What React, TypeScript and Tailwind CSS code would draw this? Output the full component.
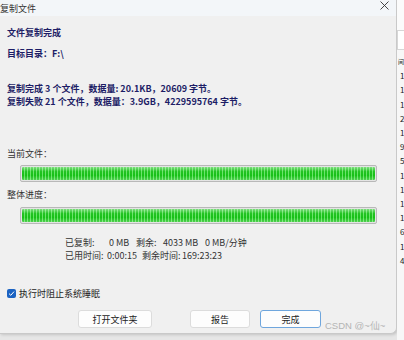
import React from 'react';

const sideRows = ['1', '1', '1', '2', '1', '9', '5', '1', '1', '1', '1', '6', '1', '4'];

const ProgressBar: React.FC = () => (
  <div className="ml-[13px] h-[17px] w-[357px] rounded-[2px] border border-[#b8b8b8] bg-[#e4e4e4] p-[1px]">
    <div className="h-full w-full rounded-[1px] bg-[repeating-linear-gradient(90deg,#17c017_0px,#17c017_1.5px,#66e466_1.5px,#66e466_3px)]">
      <div className="h-full w-full bg-[linear-gradient(180deg,rgba(255,255,255,0.45)_0%,rgba(255,255,255,0.05)_35%,rgba(0,0,0,0)_65%,rgba(255,255,255,0.25)_100%)]" />
    </div>
  </div>
);

const Button: React.FC<{ label: string; width: string; primary?: boolean; className?: string }> = ({ label, width, primary, className }) => (
  <div
    className={`${width} ${className ?? ''} flex h-[18px] items-center justify-center rounded-[3px] border bg-[#fdfdfd] text-[9px] text-[#222] ${
      primary ? 'border-[#6fa6dd]' : 'border-[#dcdcdc]'
    }`}
  >
    {label}
  </div>
);

export default function App() {
  return (
    <div className="flex h-[340px] w-[404px] overflow-hidden bg-[#e6e6e6] font-['Noto_Sans_CJK_SC','Liberation_Sans',sans-serif]">
      {/* dialog */}
      <div className="flex h-[334px] w-[397px] shrink-0 flex-col rounded-br-[6px] border-r border-b border-[#c9c9c9] bg-[#f0f0f0] shadow-[1px_1px_3px_rgba(0,0,0,0.15)]">
        <div className="flex h-[16px] items-center justify-between bg-[#f3f6f9]">
          <span className="text-[9px] leading-[13px] text-[#333]">复制文件</span>
          <svg width="9" height="9" viewBox="0 0 9 9" className="mr-[7px] mb-[5px]">
            <path d="M0.5 0.5 L8.5 8.5 M8.5 0.5 L0.5 8.5" stroke="#333" strokeWidth="0.9" fill="none" />
          </svg>
        </div>

        <div className="flex flex-col pl-[7px] text-[9px] leading-[13px]">
          <p className="mt-[10px] font-bold text-[#1d1d66]">文件复制完成</p>
          <p className="mt-[8px] font-bold text-[#1d1d66]">目标目录：F:\</p>
          <p className="mt-[22px] font-bold text-[#1d1d66]">复制完成 3 个文件，数据量: 20.1KB，20609 字节。</p>
          <p className="font-bold text-[#1d1d66]">复制失败 21 个文件，数据量：3.9GB，4229595764 字节。</p>

          <p className="mt-[39px] text-[#333]">当前文件：</p>
          <div className="mt-[5px]">
            <ProgressBar />
          </div>
          <p className="mt-[6px] text-[#333]">整体进度：</p>
          <div className="mt-[6px]">
            <ProgressBar />
          </div>

          <div className="mt-[12px] ml-[58px] flex flex-col text-[#333]">
            <div className="flex whitespace-nowrap">
              <span className="w-[44px]">已复制:</span>
              <span className="w-[27px]">0 MB</span>
              <span className="w-[27px]">剩余:</span>
              <span className="w-[42px]">4033 MB</span>
              <span>0 MB/分钟</span>
            </div>
            <div className="flex whitespace-nowrap">
              <span className="w-[42px]">已用时间:</span>
              <span className="w-[35px]">0:00:15</span>
              <span className="w-[40px]">剩余时间:</span>
              <span>169:23:23</span>
            </div>
          </div>

          <div className="mt-[25px] flex items-center gap-[3px] text-[#222]">
            <span className="flex h-[9px] w-[9px] items-center justify-center rounded-[2px] bg-[#1b63c2]">
              <svg width="7" height="7" viewBox="0 0 7 7">
                <path d="M1 3.6 L2.8 5.3 L6 1.6" stroke="#fff" strokeWidth="1" fill="none" />
              </svg>
            </span>
            <span>执行时阻止系统睡眠</span>
          </div>

          <div className="mt-[10px] flex items-start whitespace-nowrap">
            <Button label="打开文件夹" width="w-[74px]" className="ml-[71px]" />
            <Button label="报告" width="w-[60px]" className="ml-[38px]" />
            <Button label="完成" width="w-[61px]" className="ml-[10px]" primary />
            <span className="mt-[9px] ml-[4px] font-['Liberation_Sans',sans-serif] text-[9.5px] leading-[13px] text-[#b4b4b4]">
              CSDN @~仙~
            </span>
          </div>
        </div>
      </div>

      {/* window behind */}
      <div className="flex h-full flex-1 flex-col overflow-hidden bg-[#f7f7f7]">
        <div className="h-[30px] bg-[#fbfbfb]" />
        <div className="h-[20px] border-y border-l border-[#d6d6d6] bg-white" />
        <div className="mt-[5px] flex flex-col pl-[1px] text-[8px] leading-[14.2px] text-[#222]">
          <span className="text-[6px]">间</span>
          {sideRows.map((r, i) => (
            <span key={i} className="pl-[2px]">
              {r}
            </span>
          ))}
        </div>
      </div>
    </div>
  );
}
